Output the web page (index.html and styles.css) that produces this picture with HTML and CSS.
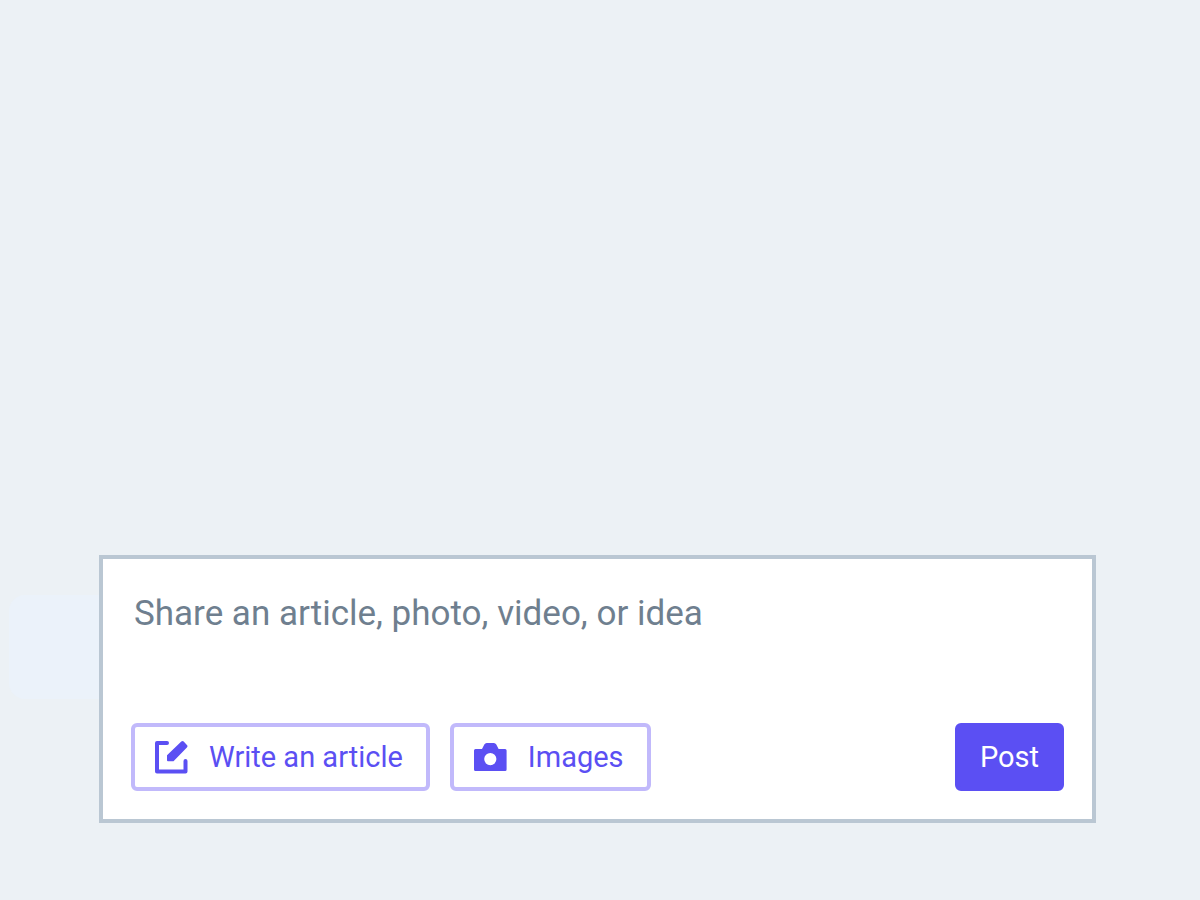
FILE: index.html
```html
<!DOCTYPE html>
<html lang="en">
<head>
    <meta charset="utf-8">
    <title>Share a post</title>
    <link rel="stylesheet" href="styles.css">
</head>
<body>
    <main class="page">
        <form class="composer">
            <textarea class="message" rows="2" placeholder="Share an article, photo, video, or idea" aria-label="Post text"></textarea>
            <div class="actions">
                <button type="button" class="btn btn-outline">
                    <svg class="icon" viewBox="0 0 33 33" aria-hidden="true">
                        <path d="M12 2H2v28.500h28.500V20" fill="none" stroke="currentColor" stroke-width="4" stroke-linecap="round" stroke-linejoin="round"/>
                        <path d="M12 14.200L26.300 .6q1.200-1 2.400 0l3.200 3.400q1.200 1.200 0 2.400L18.500 20.300H13q-1 0-1-1z" fill="currentColor"/>
                    </svg>
                    Write an article
                </button>
                <button type="button" class="btn btn-outline">
                    <svg class="icon" viewBox="0 0 33 33" aria-hidden="true">
                        <path fill="currentColor" fill-rule="evenodd" d="M1.500 8H8l2.300-4.500Q11.200 2 12.700 2h7.200Q21.400 2 22.300 3.500L24.600 8h6.500Q32.600 8 32.600 9.500v19q0 1.500-1.500 1.500H1.500Q0 30 0 28.500v-19Q0 8 1.500 8zM16.300 12a6.100 6.100 0 1 0 0 12.200a6.100 6.100 0 1 0 0-12.200z"/>
                    </svg>
                    Images
                </button>
                <button type="submit" class="btn btn-post">Post</button>
            </div>
        </form>
    </main>
</body>
</html>
```
FILE: styles.css
```css
* {
    box-sizing: border-box;
}
body {
    margin: 0;
    background-color: #ecf1f5;
    font-family: Roboto, "Liberation Sans", sans-serif;
}
.page {
    display: flex;
    flex-direction: column;
    justify-content: flex-end;
    min-height: 100vh;
    padding: 0 104px 77px 99px;
}
.composer {
    position: relative;
    padding: 28px;
    background-color: #fff;
    border: 4px solid #bac7d3;
}
/* faint panel sticking out behind the left edge */
.composer::before {
    content: "";
    position: absolute;
    right: 100%;
    top: 36px;
    width: 90px;
    height: 104px;
    margin-right: 4px;
    background-color: #ebf2fa;
    border-radius: 16px 0 0 16px;
}
.message {
    display: block;
    width: 100%;
    margin: 0 0 28px;
    padding: 0 3px;
    border: none;
    outline: none;
    resize: none;
    background: none;
    color: #6f7f8f;
    font-family: inherit;
    font-size: 35px;
    line-height: 54px;
}
.message::placeholder {
    color: #6f7f8f;
    opacity: 1;
}
.actions {
    display: flex;
    gap: 20px;
}
.btn {
    display: flex;
    align-items: center;
    height: 68px;
    padding: 0 21px;
    border: 4px solid #5b4ff3;
    border-radius: 6px;
    font-family: inherit;
    font-size: 29px;
    cursor: pointer;
}
.btn-outline {
    gap: 21px;
    padding: 0 23px 0 20px;
    background-color: #fff;
    border-color: #c1b9fb;
    color: #5b4ff3;
}
.btn-post {
    margin-left: auto;
    background-color: #5b4ff3;
    color: #fff;
}
.icon {
    width: 33px;
    height: 33px;
}
```
